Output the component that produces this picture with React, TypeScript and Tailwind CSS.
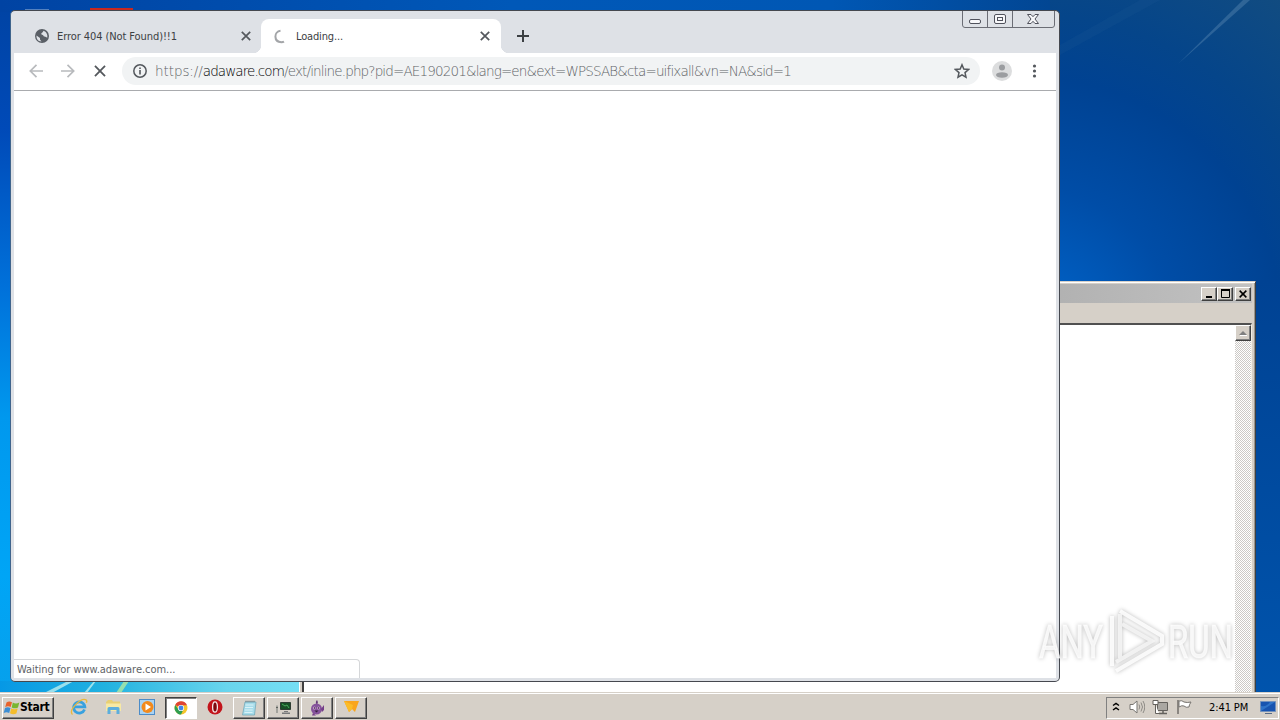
import type { ReactNode } from "react"

const UI_FONT = "font-['DejaVu_Sans_Condensed','DejaVu_Sans',sans-serif]"

function Globe() {
  return (
    <svg width="14" height="14" viewBox="0 0 14 14">
      <circle cx="7" cy="7" r="7" fill="#5a5f66" />
      <path d="M1.500 6.500 5 9v1.500l1.500 2C3 12.500 1.200 9.500 1.500 6.500z" fill="#dee1e6" />
      <path d="M8.500 1.700C8 3.500 6.800 3.500 6.300 4.500c-.5 1 .7 1.200 1.500 1.500 1 .5.500 1.600 2 1.600.9 0 1.200.9 2.400 1.100.8-3-1-6-3.700-7z" fill="#dee1e6" />
    </svg>
  )
}

function Cross({ size, color = "#54585d", width = 1.700 }: { size: number; color?: string; width?: number }) {
  return (
    <svg width={size} height={size} viewBox="0 0 10 10">
      <path d="M.8.8 9.200 9.200M9.200.8.8 9.200" stroke={color} strokeWidth={width} fill="none" />
    </svg>
  )
}

function Arrow({ flip = false }: { flip?: boolean }) {
  return (
    <svg width="14" height="14" viewBox="0 0 14 14" className={flip ? "rotate-180" : ""}>
      <path d="M14 7H1.500M7.500.8 1.300 7l6.200 6.200" stroke="#b8babd" strokeWidth="1.700" fill="none" />
    </svg>
  )
}

/* Wallpaper */
function Wallpaper() {
  return (
    <svg className="absolute inset-0" width="1280" height="720" viewBox="0 0 1280 720">
      <defs>
        <linearGradient id="left" x1="0" y1="0" x2="0" y2="1">
          <stop offset="0" stopColor="#0043a3" />
          <stop offset=".18" stopColor="#004ab8" />
          <stop offset=".4" stopColor="#0071da" />
          <stop offset=".58" stopColor="#0098ee" />
          <stop offset=".8" stopColor="#00a5f6" />
          <stop offset="1" stopColor="#089fe9" />
        </linearGradient>
        <linearGradient id="top" x1="0" y1="0" x2="1" y2="0">
          <stop offset="0" stopColor="#0043a3" />
          <stop offset=".4" stopColor="#0058b8" />
          <stop offset=".65" stopColor="#0057b4" />
          <stop offset=".83" stopColor="#024591" />
          <stop offset="1" stopColor="#0b4586" />
        </linearGradient>
        <radialGradient id="right" gradientUnits="userSpaceOnUse" cx="1030" cy="330" r="420">
          <stop offset="0" stopColor="#0066ca" />
          <stop offset=".14" stopColor="#005cbe" />
          <stop offset=".34" stopColor="#004da7" />
          <stop offset=".6" stopColor="#004292" />
          <stop offset=".75" stopColor="#05458a" />
          <stop offset="1" stopColor="#124c80" />
        </radialGradient>
        <linearGradient id="bottom" x1="0" y1="0" x2="1" y2="0">
          <stop offset="0" stopColor="#0698e5" />
          <stop offset=".35" stopColor="#22b2e0" />
          <stop offset=".75" stopColor="#69d5ed" />
          <stop offset="1" stopColor="#75dff5" />
        </linearGradient>
        <linearGradient id="edge" x1="0" y1="0" x2="0" y2="1">
          <stop offset="0" stopColor="#004293" />
          <stop offset="1" stopColor="#0054ad" />
        </linearGradient>
      </defs>
      <rect width="1280" height="720" fill="url(#left)" />
      <rect width="1280" height="12" fill="url(#top)" />
      <rect x="1050" width="230" height="290" fill="url(#right)" />
      <rect x="1250" y="280" width="30" height="420" fill="url(#edge)" />
      <rect y="681" width="302" height="12" fill="url(#bottom)" />
      <path d="M44 693 68 681h6l-22 12zM84 693l10-12h2l-9 12z" fill="#c8f3ef" opacity=".75" />
      <path d="m116 693 8-12h5l-8 12z" fill="#b9ec9c" opacity=".75" />
      <path d="M1060 45 1140 0h20l-100 55z" fill="#205c98" opacity=".2" />
      <path d="M1178 64 1243 0h7z" fill="#6d99be" opacity=".35" />
      <path d="M90 8h43v4H90z" fill="#c9281f" />
      <path d="M25 9.500h24v1H25z" fill="#a9bfdb" />
    </svg>
  )
}

function CaptionButton({ children }: { children: ReactNode }) {
  return (
    <div className="flex h-[14px] w-4 items-center justify-center border border-t-white border-l-white border-r-[#404040] border-b-[#404040] bg-[#d6d0c8] shadow-[inset_-1px_-1px_0_#808080]">
      {children}
    </div>
  )
}

/* Classic window that sits behind the browser */
function NotepadWindow() {
  return (
    <div className="absolute left-[299px] top-[281px] flex h-[430px] w-[957px] flex-col border-t border-r border-t-[#d6d0c8] border-r-[#404040] bg-[#d6d0c8] px-[3px] pt-[2px] shadow-[inset_0_1px_0_#fff,inset_1px_0_0_#fff,inset_-1px_0_0_#9a968e]">
      <div className="flex h-[19px] items-center justify-end bg-linear-to-r from-[#808080] from-0% via-[#b2b2b2] via-80% to-[#c2c2c2] pr-px">
        <CaptionButton>
          <svg width="8" height="8"><path d="M1 6h6v2H1z" /></svg>
        </CaptionButton>
        <CaptionButton>
          <svg width="9" height="9"><path d="M.5 1h8v7.500h-8z" fill="none" stroke="#000" /><path d="M0 0h9v2H0z" /></svg>
        </CaptionButton>
        <div className="w-[2px]" />
        <CaptionButton>
          <Cross size={8} color="#000" width={1.900} />
        </CaptionButton>
      </div>
      <div className="h-[20px]" />
      <div className="flex flex-1 border-t-2 border-r border-l-2 border-t-[#505050] border-r-[#f2eee4] border-l-[#404040] bg-white">
        <div className="flex-1" />
        <div className="w-4 bg-[repeating-conic-gradient(#fff_0_25%,#ccc9c6_0_50%)] bg-size-[2px_2px]">
          <div className="flex h-4 items-center justify-center border border-t-white border-l-white border-r-[#404040] border-b-[#404040] bg-[#d6d0c8] shadow-[inset_-1px_-1px_0_#808080]">
            <svg width="8" height="5"><path d="M4 0l4 4H0z" fill="#808080" /><path d="M1 4.500h7" stroke="#fff" /></svg>
          </div>
        </div>
      </div>
    </div>
  )
}

function WindowControls() {
  return (
    <svg className="absolute right-[3px] top-0" width="94" height="18" viewBox="0 0 94 18" fill="none" stroke="#6b6d75">
      <path d="M.5 0v14q0 2.500 2.500 2.500h87q2.500 0 2.500-2.500V0M25.500 0v16M50.500 0v16" />
      <rect x="7.500" y="8.500" width="11" height="4" rx="1.500" fill="#f7f7f9" stroke="#50525c" />
      <rect x="32.500" y="3.500" width="11" height="9" rx="1.500" fill="#f7f7f9" stroke="#50525c" />
      <rect x="35.500" y="6.500" width="5" height="3" stroke="#50525c" />
      <path d="M65.500 3.500h3.500l2 2.200 2-2.200h3.500l-3.500 4.500 3.500 4.500h-3.500l-2-2.200-2 2.200h-3.500l3.500-4.500z" fill="#f7f7f9" stroke="#50525c" />
    </svg>
  )
}

function TabStrip() {
  return (
    <div className="flex h-[42px] items-end pl-[10px]">
      <div className="flex h-[34px] w-[237px] items-center pl-[11px] pr-[10px]">
        <Globe />
        <span className="ml-2 flex-1 whitespace-nowrap pt-[2px] text-[11px] tracking-[-0.080px] text-[#3c4043]">Error 404 (Not Found)!!1</span>
        <Cross size={10} />
      </div>
      <div className="relative flex h-[34px] w-[240px] items-center rounded-t-lg bg-white pl-[12px] pr-[11px]">
        <div className="absolute -left-2 bottom-0 size-2 bg-[radial-gradient(circle_at_0_0,transparent_8px,#fff_8.5px)]" />
        <div className="absolute -right-2 bottom-0 size-2 bg-[radial-gradient(circle_at_100%_0,transparent_8px,#fff_8.5px)]" />
        <svg width="15" height="15" viewBox="0 0 15 15">
          <path d="M7.500 1.800C.8 2.500.3 12.800 8.500 13.300q1.500 0 2.500-.6" fill="none" stroke="#a3a5a8" strokeWidth="2" />
        </svg>
        <span className="ml-2 flex-1 pt-[2px] text-[11px] tracking-[-0.150px] text-[#3c4043]">Loading...</span>
        <Cross size={10} />
      </div>
      <svg className="mb-[11px] ml-4" width="12" height="12"><path d="M6 0v12M0 6h12" stroke="#3c4043" strokeWidth="2" /></svg>
    </div>
  )
}

function Toolbar() {
  return (
    <div className="flex h-[38px] items-center border-b border-[#a9abae] bg-white pb-px pl-[15px]">
      <Arrow />
      <div className="ml-[18px] flex"><Arrow flip /></div>
      <div className="ml-[19px] flex"><Cross size={12} width={1.500} /></div>
      <div className="ml-[16px] flex h-7 w-[858px] items-center rounded-full bg-[#f1f3f4] pl-[11px] pr-[10px]">
        <svg width="14" height="14" viewBox="0 0 14 14">
          <circle cx="7" cy="7" r="6.200" fill="none" stroke="#54585d" strokeWidth="1.500" />
          <path d="M6.200 6h1.600v4.500H6.200zM6.200 3.400h1.600V5H6.200z" fill="#54585d" />
        </svg>
        <div className="ml-2 flex-1 whitespace-nowrap font-['DejaVu_Sans_Light','DejaVu_Sans',sans-serif] text-[13.5px] font-extralight text-[#5f6367]">
          <span className="tracking-[-0.080px]">https://</span>
          <span className="tracking-[-0.900px] text-[#000]">adaware.com</span>
          <span className="tracking-[-0.850px]">/ext/inline.php?pid=AE190201&amp;lang=en&amp;ext=WPSSAB&amp;cta=uifixall&amp;vn=NA&amp;sid=1</span>
        </div>
        <svg width="16" height="16" viewBox="0 0 16 16">
          <path d="m8 1.800 1.800 4.300 4.700.4L11 9.600l1 4.600-4-2.400-4 2.400 1-4.600L1.500 6.500l4.700-.4z" fill="none" stroke="#54585d" strokeWidth="1.500" />
        </svg>
      </div>
      <svg className="ml-3" width="20" height="20" viewBox="0 0 20 20">
        <circle cx="10" cy="10" r="10" fill="#dcddde" />
        <circle cx="10" cy="6.500" r="3" fill="#9b9da0" />
        <ellipse cx="10" cy="14" rx="6" ry="2.700" fill="#9b9da0" />
      </svg>
      <svg className="ml-5" width="5" height="14" fill="#54585d">
        <circle cx="2.500" cy="2" r="1.600" /><circle cx="2.500" cy="7" r="1.600" /><circle cx="2.500" cy="12" r="1.600" />
      </svg>
    </div>
  )
}

function BrowserWindow() {
  return (
    <div className="absolute left-[10px] top-[10px] flex h-[672px] w-[1050px] flex-col rounded-[5px] border border-[#45484f] border-l-[#3f648c] bg-[#dee1e6] px-[3px] pb-[3px]">
      <WindowControls />
      <TabStrip />
      <Toolbar />
      <div className="flex flex-1 flex-col justify-end bg-white">
        <div className="h-[19px] w-[346px] rounded-tr border-t border-r border-[#d5d7d9] pl-[3px] text-[11px] leading-[19px] tracking-[-0.040px] text-[#606367]">
          Waiting for www.adaware.com...
        </div>
      </div>
    </div>
  )
}

function Watermark() {
  return (
    <svg className="absolute left-[1020px] top-[602px] drop-shadow-[0_0_2px_#00000050]" width="250" height="78" viewBox="-10 0 250 78">
      <g fill="#fff" fillOpacity=".8" stroke="#fff" strokeOpacity=".6" fontFamily="Roboto, sans-serif" fontSize="46">
        <text x="9" y="56" textLength="64" lengthAdjust="spacingAndGlyphs">ANY</text>
        <text x="138" y="56" textLength="65" lengthAdjust="spacingAndGlyphs">RUN</text>
      </g>
      <g fill="none" stroke="#fff" strokeOpacity=".85" strokeWidth="4">
        <path d="M82 14v50M90 9l42 25v8L86 69" />
        <path d="M90 56V12M92 22l30 17-36 21" stroke="#f6f6f6" />
      </g>
    </svg>
  )
}

function TaskButton({ active = false, children }: { active?: boolean; children: ReactNode }) {
  return (
    <div
      className={
        active
          ? "flex h-[22px] w-8 items-center justify-center border border-t-[#404040] border-l-[#404040] border-r-white border-b-white bg-white shadow-[inset_1px_1px_0_#808080]"
          : "flex h-[22px] w-8 items-center justify-center border border-t-white border-l-white border-r-[#404040] border-b-[#404040] shadow-[inset_-1px_-1px_0_#808080]"
      }
    >
      {children}
    </div>
  )
}

function StartFlag() {
  return (
    <svg width="17" height="16" viewBox="0 0 17 16">
      <path d="M3.500 2.500Q6 .5 9 2.200L7.700 7Q4.800 5.500 2.200 7.200z" fill="#e8632b" />
      <path d="M9.800 2.500q3 1.800 6.500 0L15 7.500q-3 1.700-6.300 0z" fill="#79b62f" />
      <path d="M2 8Q4.600 6.500 7.500 8l-1.300 5Q3.500 11.300.7 13z" fill="#3c8ed4" />
      <path d="M8.300 8.300q3.200 1.700 6.400.1l-1.300 5q-3.200 1.600-6.400-.2z" fill="#f5bd2b" />
    </svg>
  )
}

function Taskbar() {
  return (
    <div className="absolute bottom-0 left-0 flex h-7 w-full items-center border-t border-[#d6d0c8] bg-[#d6d0c8] pl-[2px] shadow-[inset_0_1px_0_#fff]">
      <div className="mt-[2px] flex h-[22px] w-[52px] items-center border border-t-white border-l-white border-r-[#404040] border-b-[#404040] shadow-[inset_-1px_-1px_0_#808080]">
        <StartFlag />
        <span className="-mt-px text-[12px] font-bold tracking-[-0.250px] text-black">Start</span>
      </div>

      {/* Internet Explorer */}
      <svg className="ml-[16px] mt-px" width="18" height="18" viewBox="0 0 18 18">
        <path d="M14.500 11.500A5.600 5.600 0 1 1 14.800 8.800H5" fill="none" stroke="#38a1df" strokeWidth="2.800" />
        <path d="M2.500 16.500C-2 12 11-.5 16 1.800c1 .5 1 1.700.3 3" fill="none" stroke="#e9b93b" strokeWidth="1.300" />
      </svg>
      {/* Explorer */}
      <svg className="ml-[17px] mt-px" width="17" height="16" viewBox="0 0 17 16">
        <path d="M1 3 3 1h4l1 1.500h7V9H1z" fill="#e8cf74" />
        <path d="M1 4.500h15V12H1z" fill="#f7e9a4" />
        <path d="M2.500 15V9.500q0-1.500 1.500-1.500h9q1.500 0 1.500 1.500V15h-3v-4h-6v4z" fill="#5daedc" />
      </svg>
      {/* Media Player */}
      <svg className="ml-[17px] mt-px" width="17" height="17" viewBox="0 0 17 17">
        <rect x=".5" y=".5" width="15" height="15" fill="#a9d3f3" stroke="#4c8cc8" />
        <circle cx="8.500" cy="8" r="6" fill="#f28a1d" />
        <path d="m6.500 4.500 5.500 3.500-5.500 3.500z" fill="#fff" />
      </svg>
      <div className="ml-[9px] mt-[2px]">
        <TaskButton active>
          <svg width="14" height="14" viewBox="0 0 14 14">
            <circle cx="7" cy="7" r="6.500" fill="#f5c52c" />
            <path d="M7 7 1.200 4A6.500 6.500 0 0 1 13 4.200H7z" fill="#df4434" />
            <path d="M1.300 4A6.500 6.500 0 0 0 7 13.500L9.500 8.500 4.500 8.500z" fill="#2f9e51" />
            <circle cx="7" cy="7" r="3.100" fill="#fff" /><circle cx="7" cy="7" r="2.400" fill="#4285e8" />
          </svg>
        </TaskButton>
      </div>
      {/* Opera */}
      <svg className="ml-[10px] mt-px" width="16" height="16" viewBox="0 0 16 16">
        <circle cx="8" cy="8" r="7.500" fill="#c3141b" />
        <ellipse cx="8" cy="8" rx="2.400" ry="5.200" fill="#7e090e" stroke="#f5eaea" strokeWidth="1.300" />
      </svg>

      <div className="ml-[10px] mt-[2px] flex gap-[2px]">
        <TaskButton>
          <svg width="16" height="16" viewBox="0 0 16 16">
            <path d="M4 2h11l-1.500 13H1.500z" fill="#a7dcea" stroke="#6aa3b5" strokeWidth=".7" />
            <path d="M4.500 1.500h10" stroke="#617780" strokeWidth="1.500" strokeDasharray="1 1" />
            <path d="M4.500 5h8M4 7.500h8M3.700 10h8M3.500 12.500h8" stroke="#daf2f7" />
          </svg>
        </TaskButton>
        <TaskButton>
          <svg width="17" height="15" viewBox="0 0 17 15">
            <path d="M5.500 2.500h10v7h-10z" fill="#174f25" stroke="#2d3c31" />
            <path d="m7 4 3 2 2-1 2 3" stroke="#48a95a" fill="none" />
            <path d="M9 11h4v1H9zM7 12.500h8v1.500H7z" fill="#77797a" /><path d="M1 5.500h2V13H1z" fill="#a3a39d" /><path d="M1 7.500h2" stroke="#5e625e" />
          </svg>
        </TaskButton>
        <TaskButton>
          <svg width="16" height="16" viewBox="0 0 16 16">
            <path d="M8 0q-2 2-.5 4.500Q10 3 8 0z" fill="#643a78" />
            <circle cx="7.500" cy="9" r="5.500" fill="#85529b" />
            <path d="m12 9 3-4v5l-2 2zM4 13l-1 2.500h4z" fill="#743e88" />
            <circle cx="5.300" cy="8" r="1.500" fill="#cfa9d3" /><circle cx="9.500" cy="8" r="1.500" fill="#cfa9d3" />
            <circle cx="5.500" cy="8" r=".8" fill="#36203f" /><circle cx="9.500" cy="8" r=".8" fill="#36203f" />
            <path d="m5.500 10.500 2 2 2-2z" fill="#36203f" />
          </svg>
        </TaskButton>
        <TaskButton>
          <svg className="-mt-[2px]" width="15" height="13" viewBox="0 0 15 13">
            <path d="M0 1h15l-4 11-3-3-3 3z" fill="#f9a51d" />
            <path d="m0 1 5 11 3-3 1-4z" fill="#fbbc27" />
          </svg>
        </TaskButton>
      </div>

      {/* Tray */}
      <div className="ml-auto mr-px mt-[2px] flex h-[22px] w-[173px] items-center border border-t-[#808080] border-l-[#808080] border-r-white border-b-white pl-[5px]">
        <svg className="-mt-[2px]" width="8" height="10" viewBox="0 0 8 10"><path d="m1 3.500 3-2 3 2M1 8l3-2 3 2" fill="none" stroke="#000" strokeWidth="1.500" /></svg>
        <svg className="-mt-[2px] ml-[9px]" width="16" height="16" viewBox="0 0 16 16">
          <path d="M1 5.500h3L8 2v12L4 10.500H1z" fill="#fff" stroke="#797672" />
          <path d="M10 5.500q1.500 2.500 0 5M12 3.500q3 4.500 0 9M14 2q3.500 6 0 12" fill="none" stroke="#8e8b86" />
        </svg>
        <svg className="-mt-[2px] ml-[7px]" width="17" height="16" viewBox="0 0 17 16">
          <path d="M5.500 3.500h10v8h-10z" fill="#aaa7a2" stroke="#64615d" />
          <path d="M7 14.500h8M11 12v2" stroke="#64615d" strokeWidth="1.500" />
          <path d="M1 1.500h5v4H1zM3.500 5v9.500H7" fill="#fff" stroke="#64615d" />
        </svg>
        <svg className="-mt-[2px] ml-[7px]" width="17" height="16" viewBox="0 0 17 16">
          <path d="M2 1v14" stroke="#716e6a" strokeWidth="1.500" />
          <path d="M3 2q3-1 5 1 3 1 7 0-2 3-2 5-3 1-5-1-2-1-5 1z" fill="#fff" stroke="#777470" />
        </svg>
        <span className="ml-[16px] whitespace-nowrap pt-px text-[11px] tracking-[-0.100px] text-black">2:41 PM</span>
        <svg className="ml-auto mr-[2px]" width="16" height="14" viewBox="0 0 16 14">
          <path d="M.5.5h15v10H.5z" fill="#1854b0" stroke="#7391bc" />
          <path d="M1 10V5q6 1 9-4h5z" fill="#2f73c8" /><path d="M5 12.500h7" stroke="#596c86" />
        </svg>
      </div>
    </div>
  )
}

export default function App() {
  return (
    <div className={`relative h-[720px] w-[1280px] overflow-hidden bg-[#004a9f] ${UI_FONT}`}>
      <Wallpaper />
      <NotepadWindow />
      <BrowserWindow />
      <Taskbar />
      <Watermark />
    </div>
  )
}
